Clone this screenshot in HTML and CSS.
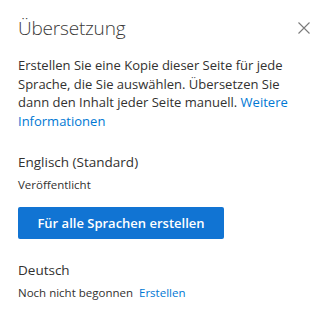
FILE: index.html
```html
<!DOCTYPE html>
<html lang="de">
<head>
<meta charset="utf-8">
<title>Übersetzung</title>
<link rel="stylesheet" href="styles.css">
</head>
<body>
<div class="panel">
  <div class="header">
    <h1 class="title">Übersetzung</h1>
    <button class="close" aria-label="Schließen">
      <svg width="12" height="12" viewBox="0 0 12 12"><path d="M0.5 0.5 L11.5 11.5 M11.5 0.5 L0.5 11.5" stroke="#7a7a7a" stroke-width="1.1" fill="none"/></svg>
    </button>
  </div>
  <p class="desc">Erstellen Sie eine Kopie dieser Seite für jede Sprache, die Sie auswählen. Übersetzen Sie dann den Inhalt jeder Seite manuell. <a class="link" href="#">Weitere Informationen</a></p>
  <div class="lang">
    <div class="lang-name">Englisch (Standard)</div>
    <div class="lang-status">Veröffentlicht</div>
  </div>
  <button class="primary">Für alle Sprachen erstellen</button>
  <div class="lang lang-second">
    <div class="lang-name">Deutsch</div>
    <div class="lang-status">Noch nicht begonnen <a class="link action" href="#">Erstellen</a></div>
  </div>
</div>
</body>
</html>
```
FILE: styles.css
```css
html, body {
  margin: 0;
  padding: 0;
  background: #ffffff;
}
body {
  font-family: "Open Sans", "Noto Sans", sans-serif;
  color: #323130;
}
.panel {
  padding: 14px 18px 0 18px;
  width: 331px;
  box-sizing: border-box;
}
.header {
  display: flex;
  justify-content: space-between;
  align-items: flex-start;
}
.title {
  margin: 0;
  font-size: 19px;
  font-weight: 300;
  color: #3b3a39;
  line-height: 28px;
  letter-spacing: -0.2px;
}
.close {
  border: 0;
  background: none;
  padding: 0;
  margin-right: 3px;
  margin-top: 8px;
  display: flex;
}
.desc {
  margin: 14px 0 0 0;
  max-width: 290px;
  font-size: 13px;
  line-height: 18.5px;
  letter-spacing: 0;
}
.link {
  color: #0078d4;
  text-decoration: none;
}
.lang {
  margin-top: 22px;
}
.lang-second {
  margin-top: 21px;
}
.lang-name {
  font-size: 13.5px;
  line-height: 20px;
}
.lang-status {
  font-size: 11.5px;
  line-height: 16px;
  margin-top: 5px;
}
.action {
  margin-left: 3px;
}
.primary {
  display: block;
  margin-top: 14px;
  width: 206px;
  height: 32px;
  border: 0;
  border-radius: 2px;
  background: #1174d3;
  color: #ffffff;
  font-family: inherit;
  font-size: 13px;
  font-weight: 600;
  padding: 0;
}
```
